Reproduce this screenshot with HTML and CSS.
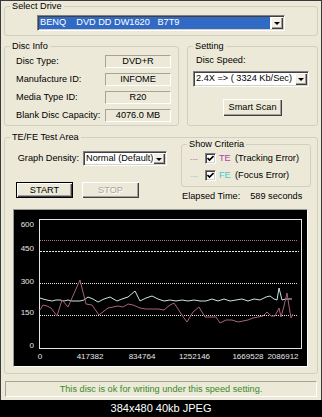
FILE: index.html
```html
<!DOCTYPE html>
<html>
<head>
<meta charset="utf-8">
<link rel="stylesheet" href="styles.css">
</head>
<body>
<div class="window">
  <fieldset class="group drive">
    <legend>Select Drive</legend>
    <div class="drive-body">
      <div class="combo combo-drive">
        <span class="combo-sel">BENQ&nbsp;&nbsp;&nbsp;&nbsp;DVD DD DW1620&nbsp;&nbsp;&nbsp;B7T9</span>
        <span class="combo-btn"></span>
      </div>
    </div>
  </fieldset>

  <div class="row2">
    <fieldset class="group">
      <legend>Disc Info</legend>
      <div class="info-grid">
        <span class="info-label">Disc Type:</span><span class="val">DVD+R</span>
        <span class="info-label">Manufacture ID:</span><span class="val">INFOME</span>
        <span class="info-label">Media Type ID:</span><span class="val">R20</span>
        <span class="info-label">Blank Disc Capacity:</span><span class="val">4076.0 MB</span>
      </div>
    </fieldset>
    <fieldset class="group">
      <legend>Setting</legend>
      <div class="setting-body">
        <div class="setting-label">Disc Speed:</div>
        <div class="combo combo-speed">
          <span class="combo-text">2.4X =&gt; ( 3324 Kb/Sec)</span>
          <span class="combo-btn"></span>
        </div>
        <button class="btn btn-scan">Smart Scan</button>
      </div>
    </fieldset>
  </div>

  <fieldset class="group tefe">
    <legend>TE/FE Test Area</legend>
    <div class="tefe-top">
      <div class="density-col">
        <div class="density-row">
          <span class="density-label">Graph Density:</span>
          <div class="combo combo-density">
            <span class="combo-text">Normal (Default)</span>
            <span class="combo-btn"></span>
          </div>
        </div>
        <div class="btn-row">
          <button class="btn btn-default">START</button>
          <button class="btn btn-disabled">STOP</button>
        </div>
      </div>
      <div class="criteria-col">
        <fieldset class="group criteria">
          <legend>Show Criteria</legend>
          <div class="criteria-body">
            <div class="crit-row">
              <span class="dash te">---</span>
              <span class="check"><svg width="7" height="7" viewBox="0 0 7 7"><polyline points="0.5,3 2.5,5 6.5,1" fill="none" stroke="#000" stroke-width="1.6"/></svg></span>
              <span class="tag te">TE</span>
              <span class="desc">(Tracking Error)</span>
            </div>
            <div class="crit-row">
              <span class="dash fe">---</span>
              <span class="check"><svg width="7" height="7" viewBox="0 0 7 7"><polyline points="0.5,3 2.5,5 6.5,1" fill="none" stroke="#000" stroke-width="1.6"/></svg></span>
              <span class="tag fe">FE</span>
              <span class="desc">(Focus Error)</span>
            </div>
          </div>
        </fieldset>
        <div class="elapsed"><span>Elapsed Time:</span><span class="elapsed-val">589 seconds</span></div>
      </div>
    </div>

    <div class="chart">
      <svg width="293" height="156" viewBox="14 210 293 156">
        <rect x="39.5" y="219.5" width="262" height="129" fill="none" stroke="#E4E4E4" stroke-width="1"/>
        <line x1="40" y1="240.5" x2="297" y2="240.5" stroke="#B07488" stroke-dasharray="1 1"/>
        <line x1="40" y1="251.5" x2="299" y2="251.5" stroke="#E8E8E8" stroke-dasharray="2 1"/>
        <line x1="40" y1="283.5" x2="298" y2="283.5" stroke="#E8E8E8" stroke-dasharray="1 1"/>
        <line x1="40" y1="315.5" x2="298" y2="315.5" stroke="#E8E8E8" stroke-dasharray="1 1"/>
        <polyline fill="none" stroke="#C8E6E2" stroke-width="1" points="40,298 43,299 47,300 52,301 56,300 60,300 64,301 68,300 72,301 76,301 80,301 84,300 88,297 93,299 98,302 104,299 110,297 117,301 122,299 128,297 135,291 140,301 146,298 152,296 158,299 164,301 170,300 176,301 182,300 188,301 194,300 200,301 206,301 212,299 218,301 224,299 230,301 236,300 242,299 248,301 254,299 260,300 266,297 270,296 274,299 277,300 279,288 282,300 286,299 292,299"/>
        <polyline fill="none" stroke="#A8607E" stroke-width="1" points="40,310 43,305 47,306 51,308 57,316 62,300 68,307 80,280 86,304 92,305 99,315 104,311 108,308 113,307 118,306 123,307 128,304 133,305 140,308 146,309 152,309 158,309 164,310 170,305 174,303 180,312 184,318 187,322 193,312 199,307 205,317 210,317 216,317 220,323 226,320 232,320 238,322 243,321 248,320 253,318 258,317 263,316 267,312 271,316 275,316 279,308 281,317 284,306 287,293 289,306 291,318 293,314"/>
        <g class="ylabels">
          <text x="34" y="227">600</text>
          <text x="34" y="251">450</text>
          <text x="34" y="284">300</text>
          <text x="34" y="315">150</text>
          <text x="34" y="348">0</text>
        </g>
        <g class="xlabels">
          <text x="40" y="359">0</text>
          <text x="90" y="359">417382</text>
          <text x="142" y="359">834764</text>
          <text x="194.5" y="359">1252146</text>
          <text x="248" y="359">1669528</text>
          <text x="283" y="359">2086912</text>
        </g>
      </svg>
    </div>
  </fieldset>

  <div class="status">This disc is ok for writing under this speed setting.</div>
</div>
<div class="caption">384x480 40kb JPEG</div>
</body>
</html>
```

FILE: styles.css
```css
* { box-sizing: border-box; }
html, body { margin: 0; padding: 0; }
body {
  width: 322px;
  height: 417px;
  overflow: hidden;
  background: #000;
  font-family: "Liberation Sans", Arial, sans-serif;
  font-size: 9.2px;
  line-height: 11px;
  color: #000;
}
.window {
  height: 400px;
  background: #ECE9D8;
  border: 1px solid #3a3a3a;
  border-bottom: 0;
  padding: 0 3px;
}
.group {
  margin: 0;
  padding: 0;
  min-width: 0;
  border: 1px solid #D0D0BF;
  border-radius: 3px;
}
.group legend {
  margin-left: 5px;
  padding: 0 2px;
  line-height: 11px;
}
.drive-body { padding: 3px 0 4px 32px; }

/* combo boxes */
.combo {
  display: flex;
  height: 16px;
  padding: 1px;
  background: #fff;
  border: 1px solid;
  border-color: #808080 #fff #fff #808080;
  box-shadow: inset 1px 1px #404040, inset -1px -1px #D4D0C8;
}
.combo-text {
  flex: 1;
  padding-left: 1px;
  white-space: nowrap;
  overflow: hidden;
}
.combo-sel {
  flex: 1;
  margin: 0 1px 0 0;
  padding-left: 1px;
  background: #316AC5;
  color: #fff;
  white-space: nowrap;
  overflow: hidden;
}
.combo-btn {
  flex: 0 0 12px;
  display: flex;
  align-items: center;
  justify-content: center;
  background: #F1EFE6;
  box-shadow: inset 1px 1px #fff, inset -1px -1px #404040, inset -2px -2px #A0A0A0;
}
.combo-btn::after {
  content: "";
  border-left: 3px solid transparent;
  border-right: 3px solid transparent;
  border-top: 3px solid #000;
  margin-top: 1px;
}
.combo-drive { width: 248px; }

/* row 2 */
.row2 {
  display: grid;
  grid-template-columns: 175px 1fr;
  column-gap: 8px;
  margin-top: 5px;
}
.info-grid {
  display: grid;
  grid-template-columns: 89px 66px;
  grid-auto-rows: 13px;
  row-gap: 5px;
  padding: 3px 7px 3px 11px;
}
.info-label { align-self: center; white-space: nowrap; }
.val {
  text-align: center;
  border: 1px solid;
  border-color: #A6A498 #fff #fff #A6A498;
  line-height: 11px;
}
.setting-body { padding: 3px 0 3px 5px; }
.setting-label { padding-left: 3px; }
.combo-speed { width: 116px; margin-top: 5px; }

/* buttons */
.btn {
  display: block;
  padding: 0;
  margin: 0;
  font: inherit;
  color: #000;
  background: #ECE9D8;
  border: 0;
  box-shadow: inset 1px 1px #fff, inset -1px -1px #404040, inset -2px -2px #A0A0A0;
}
.btn-scan {
  width: 59px;
  height: 17px;
  margin: 12px 0 0 30px;
}
.btn-default {
  width: 57px;
  height: 16px;
  border: 1px solid #000;
  box-shadow: inset 1px 1px #fff, inset -1px -1px #404040, inset -2px -2px #A0A0A0;
}
.btn-disabled {
  width: 57px;
  height: 16px;
  color: #ACA899;
  text-shadow: 1px 1px #fff;
}

/* TE/FE area */
.tefe { margin-top: 6px; padding-bottom: 6px; }
.tefe-top {
  display: flex;
  margin-top: -4px;
}
.density-col {
  flex: 0 0 176px;
  padding-top: 12px;
}
.density-row {
  display: grid;
  grid-template-columns: 62px 84px;
  column-gap: 4px;
  padding-left: 12px;
  height: 15px;
  align-items: center;
}
.density-label { text-align: right; white-space: nowrap; }
.combo-density { height: 15px; }
.btn-row {
  display: flex;
  gap: 9px;
  margin-top: 16px;
  padding-left: 11px;
}
.criteria-col { width: 130px; }
.criteria-body { padding: 2px 0 4px 8px; }
.crit-row {
  display: flex;
  align-items: center;
  height: 13px;
}
.crit-row + .crit-row { margin-top: 4px; }
.dash { width: 9px; font-size: 8px; }
.dash.te { color: #C86AA0; }
.dash.fe { color: #7ED6C8; }
.check {
  width: 11px;
  height: 11px;
  margin-left: 6px;
  display: flex;
  align-items: center;
  justify-content: center;
  background: #fff;
  border: 1px solid;
  border-color: #808080 #fff #fff #808080;
  box-shadow: inset 1px 1px #404040, inset -1px -1px #D4D0C8;
}
.tag { margin-left: 3px; width: 13px; }
.tag.te { color: #B040B0; }
.tag.fe { color: #48C8C8; }
.desc { margin-left: 3px; white-space: nowrap; }
.elapsed {
  display: flex;
  gap: 10px;
  margin-top: 4px;
  padding-left: 1px;
  white-space: nowrap;
}

.chart {
  width: 295px;
  height: 158px;
  margin: 7px 0 0 8px;
  background: #000;
  border: 1px solid;
  border-color: #9A9A90 #fff #fff #9A9A90;
}
.chart svg { display: block; }
.chart text {
  font-family: "Liberation Sans", Arial, sans-serif;
  font-size: 8px;
  fill: #E6E6E6;
}
.ylabels text { text-anchor: end; }
.xlabels text { text-anchor: middle; }

.status {
  height: 16px;
  margin: 7px 1px 0 1px;
  border: 1px solid;
  border-color: #A6A498 #fff #fff #A6A498;
  text-align: center;
  line-height: 14px;
  color: #3A8A2A;
}
.caption {
  height: 17px;
  line-height: 17px;
  text-align: center;
  color: #fff;
  font-size: 11px;
}
```
